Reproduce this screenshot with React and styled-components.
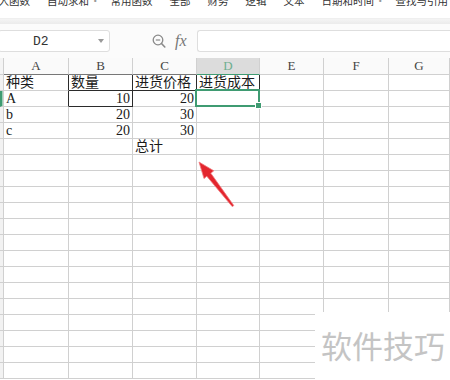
import React from 'react';
import styled, { createGlobalStyle } from 'styled-components';

const GlobalStyle = createGlobalStyle`
  html, body {
    margin: 0;
    padding: 0;
    background: #fff;
  }
  body {
    font-family: 'Noto Sans CJK SC', sans-serif;
  }
`;

const GREEN = '#3f9b72';
const GRID = '#d0d0d0';
const DARK = '#2b2b2b';

const COLS = ['A', 'B', 'C', 'D', 'E', 'F', 'G'];
const TOTAL_ROWS = 19;

// 顶部函数菜单
const menu = [
  { label: '插入函数' },
  { label: '自动求和', more: true },
  { label: '常用函数' },
  { label: '全部' },
  { label: '财务' },
  { label: '逻辑' },
  { label: '文本' },
  { label: '日期和时间', more: true },
  { label: '查找与引用' },
];

// 表格数据, 空字符串 = 空单元格
const data = [
  ['种类', '数量', '进货价格', '进货成本'],
  ['A', '10', '20', ''],
  ['b', '20', '30', ''],
  ['c', '20', '30', ''],
  ['', '', '总计', ''],
];

// 黑色边框: 'r' 右, 'b' 下
const darkBorders = {
  '0-0': 'r',
  '0-1': 'rb',
  '0-2': 'rb',
  '0-3': 'rb',
  '1-0': 'r',
  '1-1': 'rb',
};

const numeric = (v) => /^\d+$/.test(v);

const App = () => {
  const rows = [];
  for (let r = 0; r < TOTAL_ROWS; r++) {
    const line = data[r] || [];
    rows.push(<RowHead key={`h${r}`} $active={r === 1} />);
    COLS.forEach((c, ci) => {
      const v = line[ci] || '';
      const edge = darkBorders[`${r}-${ci}`] || '';
      const selected = r === 1 && ci === 3;
      rows.push(
        <Cell
          key={`${r}-${c}`}
          $right={numeric(v)}
          $darkRight={edge.includes('r')}
          $darkBottom={edge.includes('b')}
          $selected={selected}
        >
          {v}
          {selected && <Handle />}
        </Cell>
      );
    });
  }

  return (
    <Page>
      <GlobalStyle />
      <Ribbon>
        {menu.map((m) => (
          <RibbonItem key={m.label} $more={m.more}>
            {m.label}
            {m.more && <Caret>·</Caret>}
          </RibbonItem>
        ))}
      </Ribbon>
      <Divider />
      <FormulaBar>
        <NameBox>
          <NameText>D2</NameText>
          <DropArrow>
            <svg width="6" height="4" viewBox="0 0 6 4">
              <path d="M0 0 L6 0 L3 4 Z" fill="#9a9a9a" />
            </svg>
          </DropArrow>
        </NameBox>
        <Tools>
          <svg width="14" height="15" viewBox="0 0 14 15">
            <circle cx="6" cy="6" r="4.8" fill="none" stroke="#8a8a8a" strokeWidth="1.3" />
            <path d="M3.8 6 H8.2" stroke="#8a8a8a" strokeWidth="1.2" />
            <path d="M9.5 9.5 L12.8 13" stroke="#8a8a8a" strokeWidth="1.6" strokeLinecap="round" />
          </svg>
          <Fx>fx</Fx>
        </Tools>
        <FormulaInput />
      </FormulaBar>
      <Sheet>
        <Corner />
        {COLS.map((c, i) => (
          <ColHead key={c} $active={c === 'D'} $dark={i < 4 && c !== 'D'}>
            {c}
          </ColHead>
        ))}
        {rows}
      </Sheet>
      <Arrow width="50" height="60" viewBox="0 0 50 60">
        <polygon
          points="9,7 23.8,15.8 20.8,18.2 43.8,50.6 42.2,51.6 16.8,21.2 14,23.6"
          fill="#e3262e"
          stroke="#f07a7e"
          strokeWidth="0.8"
          strokeLinejoin="round"
        />
      </Arrow>
      <Watermark>软件技巧</Watermark>
    </Page>
  );
};

const Page = styled.div`
  position: relative;
  width: 450px;
  height: 380px;
  overflow: hidden;
  background: #fff;
`;

const Ribbon = styled.div`
  height: 18px;
  display: flex;
  align-items: flex-start;
  gap: 17px;
  margin-left: -12px;
  background: #fff;
  overflow: hidden;
`;

const RibbonItem = styled.span`
  margin-top: -6px;
  margin-right: ${(p) => (p.$more ? '-7px' : '0')};
  font-size: 10.5px;
  line-height: 14px;
  color: #333;
  white-space: nowrap;
  flex-shrink: 0;
`;

const Caret = styled.span`
  color: #999;
  margin-left: 1px;
`;

const Divider = styled.div`
  height: 6px;
  background: linear-gradient(#f4f4f4, #ebebeb);
  border-top: 1px solid #efefef;
  box-sizing: border-box;
`;

const FormulaBar = styled.div`
  height: 34px;
  display: flex;
  align-items: center;
  background: #fbfbfb;
`;

const NameBox = styled.div`
  width: 112px;
  height: 22px;
  box-sizing: border-box;
  margin-left: -2px;
  border: 1px solid #dedede;
  border-radius: 3px;
  background: #fff;
  display: flex;
  align-items: center;
`;

const NameText = styled.span`
  flex: 1;
  padding-left: 34px;
  font-family: 'Liberation Mono', monospace;
  font-size: 13px;
  color: #333;
`;

const DropArrow = styled.span`
  display: flex;
  margin-right: 5px;
`;

const Tools = styled.div`
  display: flex;
  align-items: center;
  gap: 9px;
  margin-left: 42px;
  width: 45px;
`;

const Fx = styled.span`
  font-family: 'Liberation Serif', serif;
  font-style: italic;
  font-size: 16px;
  color: #777;
`;

const FormulaInput = styled.div`
  flex: 1;
  height: 22px;
  box-sizing: border-box;
  border: 1px solid #dedede;
  border-right: none;
  border-radius: 3px 0 0 3px;
  background: #fff;
`;

const Sheet = styled.div`
  display: grid;
  grid-template-columns: 4px 65px 64px 64px 63px 64px 65px 1fr;
  grid-template-rows: 17px;
  grid-auto-rows: 16px;
`;

const Corner = styled.div`
  background: #f4f4f4;
  border-right: 1px solid ${GRID};
  border-bottom: 1px solid ${GRID};
`;

const ColHead = styled.div`
  background: ${(p) => (p.$active ? '#dcdcdc' : '#fafafa')};
  color: ${(p) => (p.$active ? '#6fae90' : '#444')};
  border-right: 1px solid ${GRID};
  border-bottom: 1px solid ${(p) => (p.$active ? GREEN : p.$dark ? '#777' : GRID)};
  font-family: 'Liberation Serif', serif;
  font-size: 13px;
  line-height: 16px;
  text-align: center;
`;

const RowHead = styled.div`
  background: ${(p) => (p.$active ? '#9fd0b8' : '#f2f2f2')};
  border-left: ${(p) => (p.$active ? `2px solid ${GREEN}` : 'none')};
  border-right: 1px solid ${GRID};
  border-bottom: 1px solid ${GRID};
`;

const Cell = styled.div`
  position: relative;
  box-sizing: border-box;
  border-right: 1px solid ${(p) => (p.$darkRight ? DARK : GRID)};
  border-bottom: 1px solid ${(p) => (p.$darkBottom ? DARK : GRID)};
  padding: 0 2px;
  font-family: 'Liberation Serif', 'Noto Sans CJK SC', serif;
  font-size: 14px;
  line-height: 16px;
  color: #1a1a1a;
  text-align: ${(p) => (p.$right ? 'right' : 'left')};
  white-space: nowrap;

  ${(p) =>
    p.$selected &&
    `
    &::after {
      content: '';
      position: absolute;
      left: -2px;
      top: -2px;
      right: -1px;
      bottom: -1px;
      border: 2px solid ${GREEN};
      pointer-events: none;
    }
  `}
`;

const Handle = styled.span`
  position: absolute;
  right: -3px;
  bottom: -3px;
  width: 5px;
  height: 5px;
  background: ${GREEN};
  border: 1px solid #fff;
  z-index: 2;
`;

const Arrow = styled.svg`
  position: absolute;
  left: 190px;
  top: 155px;
`;

const Watermark = styled.div`
  position: absolute;
  left: 315px;
  top: 312px;
  width: 135px;
  height: 68px;
  background: #fff;
  padding: 14px 0 0 6px;
  box-sizing: border-box;
  font-family: 'Noto Sans CJK SC', sans-serif;
  font-size: 31px;
  line-height: 38px;
  color: #c4c4c4;
  white-space: nowrap;
`;

export default App;
